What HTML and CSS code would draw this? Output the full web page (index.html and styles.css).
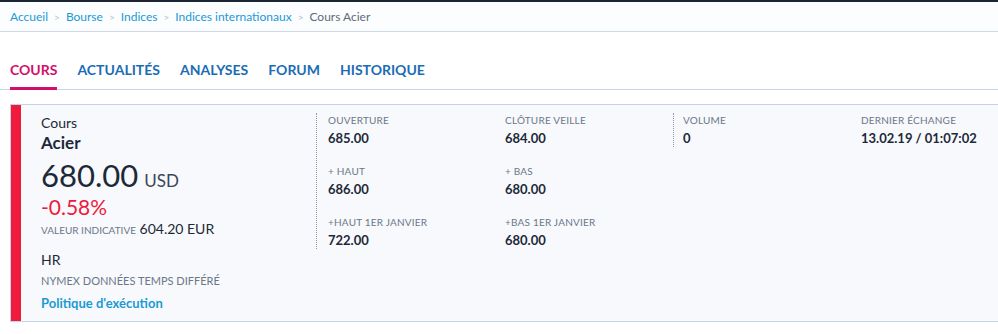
FILE: index.html
```html
<!DOCTYPE html>
<html lang="fr">
  <head>
    <meta charset="UTF-8">
    <title>Cours Acier</title>
    <link rel="stylesheet" href="styles.css">
  </head>
  <body>
    <div class="breadcrumb">
      <a href="#">Accueil</a><span class="sep">&gt;</span>
      <a href="#">Bourse</a><span class="sep">&gt;</span>
      <a href="#">Indices</a><span class="sep">&gt;</span>
      <a href="#">Indices internationaux</a><span class="sep">&gt;</span>
      <span class="current">Cours Acier</span>
    </div>
    <ul class="tabs">
      <li class="tab active">COURS</li>
      <li class="tab">ACTUALITÉS</li>
      <li class="tab">ANALYSES</li>
      <li class="tab">FORUM</li>
      <li class="tab">HISTORIQUE</li>
    </ul>
    <div class="card">
      <div class="card-accent"></div>
      <div class="quote">
        <div class="quote-label">Cours</div>
        <div class="quote-name">Acier</div>
        <div class="quote-price">680.00 <span class="currency">USD</span></div>
        <div class="quote-change">-0.58%</div>
        <div class="quote-indic"><span class="small-caps">VALEUR INDICATIVE</span> 604.20 EUR</div>
        <div class="quote-code">HR</div>
        <div class="quote-source">NYMEX DONNÉES TEMPS DIFFÉRÉ</div>
        <a class="quote-link" href="#">Politique d'exécution</a>
      </div>
      <div class="stats stats-wide">
        <div class="stat"><div class="stat-label">OUVERTURE</div><div class="stat-value">685.00</div></div>
        <div class="stat"><div class="stat-label">CLÔTURE VEILLE</div><div class="stat-value">684.00</div></div>
        <div class="stat"><div class="stat-label">+ HAUT</div><div class="stat-value">686.00</div></div>
        <div class="stat"><div class="stat-label">+ BAS</div><div class="stat-value">680.00</div></div>
        <div class="stat"><div class="stat-label">+HAUT 1ER JANVIER</div><div class="stat-value">722.00</div></div>
        <div class="stat"><div class="stat-label">+BAS 1ER JANVIER</div><div class="stat-value">680.00</div></div>
      </div>
      <div class="stats">
        <div class="stat"><div class="stat-label">VOLUME</div><div class="stat-value">0</div></div>
        <div class="stat"><div class="stat-label">DERNIER ÉCHANGE</div><div class="stat-value">13.02.19 / 01:07:02</div></div>
      </div>
    </div>
  </body>
</html>
```

FILE: styles.css
```css
body {
  margin: 0;
  font-family: 'Lato', sans-serif;
  background: #ffffff;
  color: #1d2939;
}

a {
  text-decoration: none;
  color: #1a9ad6;
}

.breadcrumb {
  border-top: 2px solid #1b2533;
  border-bottom: 1px solid #cfd9e6;
  background: #fcfdfe;
  height: 29px;
  padding-left: 10px;
  display: flex;
  align-items: center;
  font-size: 12px;
}

.breadcrumb .sep {
  color: #b7bfca;
  font-size: 10px;
  margin: 0 6px;
}

.breadcrumb .current {
  color: #5f6b7a;
}

.tabs {
  list-style: none;
  margin: 30px 0 0 0;
  padding: 0 0 0 10px;
  display: flex;
  gap: 20px;
  border-bottom: 1px solid #c8d4e3;
}

.tab {
  font-size: 14px;
  font-weight: bold;
  color: #1a6db4;
  padding-bottom: 9px;
  margin-bottom: -1px;
  border-bottom: 3px solid transparent;
  line-height: 16px;
}

.tab.active {
  color: #d1106b;
  border-bottom-color: #d1106b;
}

.card {
  display: flex;
  align-items: flex-start;
  margin: 14px 0 0 10px;
  border: 1px solid #c8d4e3;
  border-right: 0;
  background: #f7f9fc;
  height: 216px;
}

.card-accent {
  align-self: stretch;
  flex-shrink: 0;
  width: 10px;
  background: #ef1a3c;
}

.quote {
  flex-shrink: 0;
  width: 275px;
  padding: 9px 0 0 20px;
}

.quote-label {
  font-size: 14px;
  line-height: 18px;
}

.quote-name {
  font-size: 17px;
  font-weight: bold;
  line-height: 22px;
}

.quote-price {
  font-size: 31px;
  line-height: 35px;
  margin-top: 4px;
}

.currency {
  font-size: 17px;
  line-height: 1;
  color: #3b4656;
  margin-left: -2px;
}

.quote-change {
  color: #ef1a3c;
  font-size: 21px;
  line-height: 24px;
  margin-top: 2px;
}

.quote-indic {
  font-size: 14px;
  line-height: 20px;
}

.small-caps {
  font-size: 10px;
  line-height: 1;
  color: #6b7788;
}

.quote-code {
  font-size: 14px;
  line-height: 18px;
  margin-top: 12px;
}

.quote-source {
  font-size: 11px;
  color: #6b7788;
  line-height: 14px;
  margin-top: 5px;
}

.quote-link {
  display: block;
  font-size: 13px;
  font-weight: bold;
  line-height: 16px;
  margin-top: 7px;
}

.stats {
  flex: 1;
  display: grid;
  grid-template-columns: 178px 1fr;
  row-gap: 17px;
  margin-top: 8px;
  padding-left: 9px;
  border-left: 1px dotted #8d97a5;
}

.stats-wide {
  flex: none;
  width: 345px;
  grid-template-columns: 177px 168px;
  padding-left: 11px;
}

.stat-label {
  font-size: 10px;
  line-height: 14px;
  letter-spacing: 0.2px;
  color: #6b7788;
}

.stat-value {
  font-size: 13px;
  font-weight: bold;
  line-height: 18px;
  margin-top: 2px;
}
```
